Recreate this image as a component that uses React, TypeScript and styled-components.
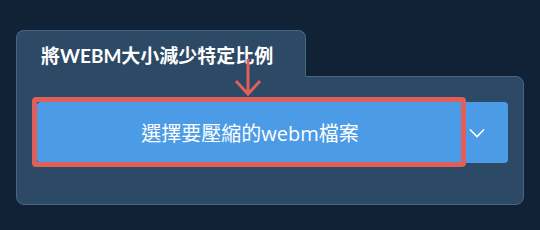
import React from 'react';
import styled, { createGlobalStyle } from 'styled-components';

const colors = {
  page: '#112236',
  panel: '#2c4966',
  edge: '#4b6585',
  blue: '#4c9be6',
  red: '#df605b',
  white: '#ffffff',
};

const GlobalStyle = createGlobalStyle`
  html, body {
    margin: 0;
    padding: 0;
    background: ${colors.page};
  }
  body {
    font-family: Lato, "Noto Sans CJK TC", "Noto Sans", sans-serif;
  }
`;

const Page = styled.div`
  width: 540px;
  height: 230px;
  box-sizing: border-box;
  padding: 30px 16px 0 16px;
`;

const Card = styled.section`
  position: relative;
  display: flex;
  flex-direction: column;
  align-items: flex-start;
`;

const Tab = styled.div`
  position: relative;
  z-index: 1;
  width: 290px;
  box-sizing: border-box;
  margin-bottom: -1px;
  padding: 14px 20px 10px 24px;
  background: ${colors.panel};
  border: 1px solid ${colors.edge};
  border-bottom: none;
  border-radius: 8px 8px 0 0;
  color: ${colors.white};
  font-size: 19px;
  font-weight: 700;
  line-height: 22px;
  white-space: nowrap;
`;

const Panel = styled.div`
  width: 508px;
  height: 129px;
  box-sizing: border-box;
  padding: 25px 15px 0 20px;
  background: ${colors.panel};
  border: 1px solid ${colors.edge};
  border-radius: 0 8px 8px 8px;
`;

const SplitButton = styled.div`
  display: flex;
  height: 61px;
`;

const MainWrap = styled.div`
  position: relative;
  flex: 1;
  display: flex;
`;

const MainButton = styled.button`
  flex: 1;
  border: none;
  margin: 0;
  background: ${colors.blue};
  border-radius: 4px 0 0 4px;
  color: ${colors.white};
  font-family: "Open Sans", "Noto Sans CJK TC", sans-serif;
  font-size: 20px;
  padding: 0 3px 0 0;
  cursor: pointer;
`;

const Highlight = styled.div`
  position: absolute;
  top: -5px;
  bottom: -4px;
  left: -5px;
  right: 0;
  border: 5px solid ${colors.red};
  border-radius: 4px;
  pointer-events: none;
`;

const Toggle = styled.button`
  width: 42px;
  border: none;
  margin: 0;
  padding: 0 0 0 3px;
  display: flex;
  align-items: center;
  justify-content: flex-start;
  background: ${colors.blue};
  border-radius: 0 4px 4px 0;
  cursor: pointer;
`;

const Pointer = styled.svg`
  position: absolute;
  z-index: 2;
  left: 218px;
  top: 29px;
  pointer-events: none;
`;

export default function App() {
  return (
    <>
      <GlobalStyle />
      <Page>
        <Card>
          <Tab>將WEBM大小減少特定比例</Tab>
          <Panel>
            <SplitButton>
              <MainWrap>
                <MainButton>選擇要壓縮的webm檔案</MainButton>
                <Highlight />
              </MainWrap>
              <Toggle aria-label="更多選項">
                <svg width="16" height="10" viewBox="0 0 16 10">
                  <path d="M1 1.5 L8 8.5 L15 1.5" fill="none" stroke="#fff" strokeWidth="1.6" />
                </svg>
              </Toggle>
            </SplitButton>
          </Panel>
          <Pointer width="30" height="38" viewBox="0 0 30 38">
            <path d="M14 0 V35 M2 22 L14 35 L26 22" fill="none" stroke={colors.red} strokeWidth="3" />
          </Pointer>
        </Card>
      </Page>
    </>
  );
}
